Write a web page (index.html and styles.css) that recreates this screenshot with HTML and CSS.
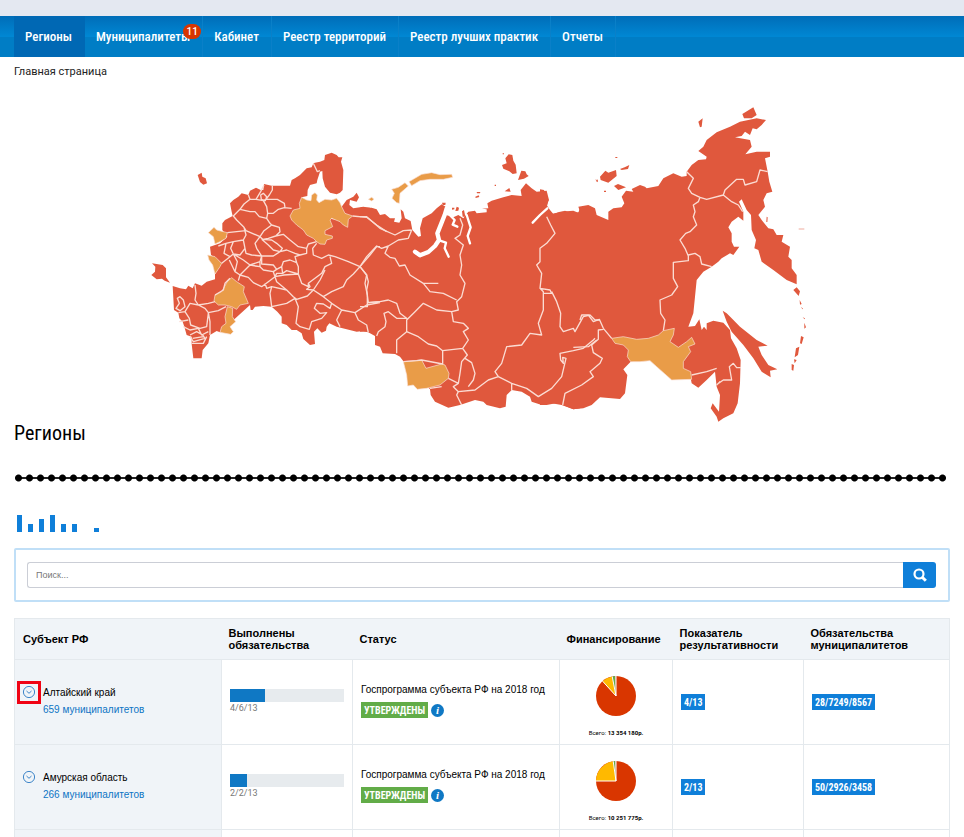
FILE: index.html
```html
<!DOCTYPE html>
<html lang="ru">
<head>
<meta charset="utf-8">
<meta name="viewport" content="width=device-width, initial-scale=1">
<title>Регионы</title>
<link rel="stylesheet" href="styles.css">
</head>
<body>
<div class="topbar"></div>
<nav class="nav">
  <a class="nav-item active" href="#">Регионы</a>
  <a class="nav-item" href="#">Муниципалитеты<span class="badge">11</span></a>
  <a class="nav-item" href="#">Кабинет</a>
  <a class="nav-item" href="#">Реестр территорий</a>
  <a class="nav-item" href="#">Реестр лучших практик</a>
  <a class="nav-item" href="#">Отчеты</a>
</nav>
<main class="page">
  <a class="crumb" href="#">Главная страница</a>
  <svg class="map" viewBox="420 300 2010 990" role="img" aria-label="Карта регионов">
    <g class="land">
      <g transform="translate(420 420)">
        <path d="M525 68 540 65 553 60 555 45 575 38 590 45 596 52 607 52 603 65 610 90 608 150 600 158 590 163 570 158 555 140 548 115 547 93 540 95 532 120 530 130 510 135 503 150 502 168 485 172 515 230 600 240 605 200 620 180 640 170 650 158 657 172 650 185 630 180 628 195 640 205 670 200 690 203 690 578 670 573 650 575 620 568 590 560 568 550 560 560 558 572 545 578 532 565 522 575 525 612 510 615 490 597 485 580 470 570 455 570 440 555 425 550 425 530 412 515 395 500 370 498 345 500 338 510 332 510 330 495 240 577 230 573 210 585 205 610 188 630 185 655 160 655 155 612 155 590 140 585 133 560 128 545 118 535 115 518 102 510 98 438 120 445 138 448 145 437 158 445 165 430 185 437 200 425 225 418 225 402 245 370 213 345 210 320 240 310 262 290 247 270 247 250 255 240 278 228 275 215 270 190 280 180 295 170 305 160 325 165 330 152 348 143 362 150 370 150 372 132 395 137 450 137 455 120 465 115 480 105 500 85 515 82 520 70Z"/>
        <path d="M173 105 185 98 187 110 197 115 201 130 190 134 180 126Z"/>
        <path d="M36 370 68 375 78 385 78 412 90 428 74 422 66 416 50 418 34 405 45 395 46 380Z"/>
      </g>
      <g transform="translate(1080 420)">
        <path d="M0 203 35 203 50 208 60 225 75 222 90 235 105 235 102 245 118 248 125 235 122 208 130 215 135 235 152 243 157 270 175 290 183 288 180 265 188 235 215 220 230 205 245 193 257 200 258 225 280 232 295 225 310 235 325 215 345 212 350 220 380 217 380 208 366 206 385 205 382 190 395 182 430 172 455 165 485 168 482 150 498 130 515 145 530 155 560 152 567 180 560 195 570 210 580 222 600 215 640 212 655 218 660 203 660 805 640 808 605 795 575 790 545 795 515 785 510 770 485 755 455 750 440 765 437 800 420 805 380 795 370 785 345 780 300 795 265 803 225 785 212 765 210 748 150 690 120 650 105 642 68 640 60 620 45 615 45 588 22 575 0 575Z"/>
        <path d="M426 75 440 70 436 55 446 43 457 45 460 62 467 74 470 100 458 102 448 94 430 86Z"/>
        <path d="M484 92 496 94 500 103 506 108 492 116 474 120Z"/>
        <path d="M246 188 257 188 256 195 248 195ZM276 203 283 203 283 208 276 209ZM290 200 297 203 295 212 286 213ZM306 214 312 210 316 230 308 230ZM346 170 356 166 358 171 347 174ZM350 156 361 156 360 160 351 160ZM404 134 408 134 408 138 404 138ZM434 154 448 144 452 155ZM428 40 432 40 432 43 428 43ZM706 118 714 124 711 127Z"/>
      </g>
      <g transform="translate(1620 300)">
        <path d="M0 268 12 270 25 300 22 315 15 335 20 345 45 340 65 335 75 332 100 342 120 335 115 320 145 315 165 325 170 345 205 360 205 335 220 325 245 322 253 310 245 290 258 272 280 275 275 267 300 255 315 260 320 265 355 258 370 235 400 220 425 230 440 228 440 215 455 195 475 180 498 178 500 170 475 153 490 140 500 120 530 97 570 80 600 65 650 55 678 60 665 75 650 88 638 85 630 105 615 95 605 108 585 112 630 120 635 140 616 163 650 155 690 155 690 170 675 175 683 215 688 245 697 275 680 280 670 300 675 320 655 345 665 360 685 385 700 388 710 405 730 405 725 425 750 440 745 470 755 480 755 505 770 525 770 553 740 540 700 510 665 485 655 450 643 445 648 420 635 390 633 345 620 330 605 298 597 305 610 335 610 362 595 350 575 365 565 382 575 400 575 425 582 440 598 440 580 465 570 460 545 475 535 485 515 500 490 515 470 540 465 590 460 640 445 680 465 678 478 658 485 690 492 680 500 690 500 670 520 662 550 668 570 690 573 715 590 745 602 780 600 850 593 910 580 940 550 955 535 965 530 950 512 925 518 910 537 935 540 885 530 860 525 815 500 840 475 863 455 850 452 835 395 805 350 765 272 785 250 808 262 825 255 880 240 897 180 892 155 915 130 925 100 928 68 915 55 908 20 915 0 915Z"/>
        <path d="M548 632 560 640 575 655 600 680 650 720 683 737 655 740 665 765 685 795 712 808 690 812 692 832 665 815 640 775 610 735 575 695 560 665Z"/>
        <path d="M475 65 488 55 485 80 480 82ZM607 42 640 22 650 45 635 55 612 55Z"/>
        <path d="M180 230 196 212 205 218 228 210 230 228 205 248 182 240ZM240 207 254 202 268 195 264 207 245 210ZM222 258 234 252 258 262 235 270ZM226 171 232 171 232 174 226 174ZM170 238 174 240 172 245ZM192 272 198 272 198 276 192 276Z"/>
        <path d="M760 570 770 562 780 574 776 588ZM779 600 785 612 780 614ZM783 620 789 626 787 628ZM788 652 795 655 794 658ZM793 668 798 682 793 686ZM783 708 791 712 785 732 780 730ZM768 745 778 740 774 765 764 772ZM762 778 770 780 764 790ZM755 792 762 795 760 812 755 810ZM680 350 683 352 682 366 679 366ZM776 386 793 386 793 388 776 388Z"/>
      </g>
    </g>
    <g class="approved">
      <g transform="translate(420 420)">
        <path d="M485 172 500 180 513 182 515 165 525 158 532 165 530 180 537 188 555 178 575 180 590 175 600 188 605 200 615 220 638 228 625 238 623 262 610 255 600 245 575 235 570 240 578 260 555 272 555 283 577 288 577 295 560 300 555 313 540 312 530 305 520 295 500 285 490 270 470 255 455 240 450 228 460 210 480 205 478 190Z"/>
        <path d="M222 262 230 270 262 278 258 295 240 305 225 312 220 290 205 278ZM203 345 225 350 245 370 240 380 225 402 218 375 207 360Z"/>
        <path d="M262 425 275 413 290 425 313 440 310 455 325 490 300 495 290 508 275 500 255 495 235 495 222 483 225 465 245 455ZM262 500 278 505 277 530 287 545 270 560 280 575 272 583 240 577 245 560 258 550 255 530Z"/>
        <path d="M685 178 695 172 702 178 695 183Z"/>
      </g>
      <g transform="translate(1080 420)">
        <path d="M95 148 115 142 135 128 145 138 120 160 118 190 110 188 96 175 103 160ZM147 125 185 103 215 98 240 104 275 103 278 112 250 118 210 118 180 122 155 137Z"/>
        <path d="M130 665 185 660 198 685 245 672 255 675 267 700 265 715 240 735 200 745 172 748 160 735 143 738 140 705Z"/>
      </g>
      <path transform="translate(1620 300)" d="M215 715 250 710 290 718 325 715 355 705 370 692 403 685 400 705 390 725 415 742 440 725 455 712 465 732 445 740 452 755 430 785 430 805 452 815 455 838 395 840 350 800 330 782 300 785 272 785 262 770 265 750 250 735 225 730Z"/>
    </g>
    <g class="borders">
      <path transform="translate(420 420)" d="M520 70 532 95 540 92M372 135 362 155 348 178 330 178 325 165M348 178 370 182 378 178 388 165 397 150 397 137M362 165 370 160 380 170 376 182 364 178ZM330 178 312 192 300 208 280 228 290 240 312 262 318 272 290 275 262 278M300 208 330 215 345 215 358 230 380 235 390 250 395 255M370 182 380 200 383 220 400 220 415 208 433 203 455 205M378 178 412 178 433 190 435 203M383 220 380 235M395 255 418 262 420 275 407 288 385 295 368 298 360 290 318 272M395 255 372 272 360 290 345 310 350 325 365 348 360 365 330 375 310 360 280 342 270 350 245 370M312 262 318 285 310 300 280 305 258 310M280 305 272 325 280 342 300 345 315 325 310 300M315 325 318 340 335 345 365 348M235 318 258 310 252 340 270 350M280 342 292 365 285 395 300 405 330 375M285 395 268 360M300 405 295 422M300 405 325 412 340 428 365 440 385 425 405 410 400 395 370 390 360 380 330 375M360 365 360 380 345 378M365 298 385 315 400 330 420 335 427 325 410 310 395 300 368 298M407 288 430 283 450 300 475 320 500 325 505 312 530 305M420 335 440 330 465 340 480 345 500 340 500 325M365 348 400 348 420 335M365 348 365 372 400 375 410 388 425 380 430 365 450 360 470 368 465 350 480 345M400 395 410 388M425 380 428 400 410 400 405 410 432 405 475 402 475 380 470 368M428 400 440 392 475 402 485 430 505 440 505 430 545 400 555 380 575 370 570 350M530 310 518 325 520 345 545 355 565 345 585 350 625 365 660 380 690 345 710 320 720 320M660 380 680 405 685 425 680 450 685 488 720 485M660 380 640 402 620 420 610 440 575 455 550 470 520 450 540 420 555 390M505 430 510 440 500 448 520 450 502 468 470 478 460 470 440 450 395 440 380 445 375 430M395 440 390 460 395 500 440 490 465 475M405 410 410 425 440 450M550 470 575 490 605 510 645 518 680 495 720 488M605 510 590 540 600 560M645 518 655 540 680 555 685 578M465 475 475 500 468 550 480 560 508 568 515 545 545 535 560 518 540 520 523 505 530 490 550 492 570 505 575 490M638 228 680 232 710 255 740 275M225 465 250 450 255 430 270 415M225 485 205 490 175 495 165 480 168 460 165 435M175 495 150 490 135 515 115 518M175 495 195 505 205 518 235 512 258 500M205 518 210 545 210 585M120 470 130 480 135 500 120 512 108 505 118 490 112 475ZM135 515 148 535 152 555 180 565 200 560 205 520M118 545 145 540M130 560 150 570 175 565 185 585 205 575M150 585 170 575 188 585 195 595 160 605 150 590M158 595 190 590M155 610 190 610 200 590"/>
      <path transform="translate(1080 420)" d="M0 230 20 230 60 265 105 285 130 272 155 270M155 270 145 295 115 300 85 318 65 325 50 318 20 350 0 380 20 405 15 430 22 465 22 500 0 500M22 488 60 485 85 480 110 490 120 520 140 535 110 535 85 515 72 520 78 545 75 560 55 575 50 588M85 318 75 340 90 352 105 355 118 378 135 375 150 405 190 430 235 430M190 430 210 455 250 460 290 480M300 235 308 255 300 285 285 295 310 315 300 345 305 375 300 405 315 430 305 470 290 485 295 510 275 515 230 510 190 490 165 515 140 540 140 575 110 600 110 640M140 575 175 590 205 612 230 618 248 632 308 625 325 600 310 575 325 565 310 550 280 545 275 515M248 632 248 672 185 660 170 662 130 665M308 625 322 645 305 665 300 700 295 730 280 740 295 755 345 750 385 720 415 710 405 695 425 670 440 620 485 615 510 580 545 585 535 550 550 510 550 455 540 445 545 400 530 375 540 365 540 325 560 310 585 280 572 255 560 230M315 655 335 668 345 700 340 720 325 740M265 715 295 730M245 740 210 745M295 755 290 765 305 795M415 710 455 730 500 745 535 770 575 745 605 710 618 655 608 652 610 670 602 660 600 640 640 632 670 625 700 600 705 595M455 730 455 750M540 445 570 450 575 460 550 460M575 455 590 485 602 520 600 560 610 575 640 565 645 575 670 530 690 525 705 540 720 540"/>
      <path transform="translate(1620 300)" d="M440 215 460 235 445 265 455 280 480 292 475 305 460 315 465 335 460 350 470 375 450 395 437 400 420 420 435 445 445 468 445 482 400 487 400 535 413 560 395 585 360 600 362 640 375 660 370 692M445 465 465 460 480 470 485 492 515 500M480 292 500 298 550 285 555 270 590 238 610 238 615 255 650 245 660 210 683 215M550 285 575 305 595 315 608 335M120 660 125 645 145 645 160 665 178 658 190 685 215 715M190 688 175 690 175 718 155 735 160 758 187 775 180 790 150 815 160 830 125 855 75 880 68 915M100 742 145 740 170 720M455 825 500 815 530 805M535 850 550 840 575 840 568 800 580 790 590 803 603 803M530 855 540 845"/>
    </g>
    <g class="water" transform="translate(1080 420)">
      <path class="wide" d="M165 335 180 346 205 336 225 318 237 300 232 280 244 250 254 225 260 205"/>
      <path class="mid" d="M240 302 258 308 254 325 266 350M272 228 284 240 278 254 292 260M320 225 332 262 323 288 330 310"/>
      <path class="mid" d="M562 205 540 225 518 248"/>
    </g>
  </svg>
  <h1 class="title">Регионы</h1>
  <div class="beads"></div>
  <div class="bars">
    <i class="bar h17"></i><i class="bar h8"></i><i class="bar h13"></i><i class="bar h17"></i><i class="bar h8"></i><i class="bar h8"></i><i class="bar"></i><i class="bar h4"></i>
  </div>
  <form class="search">
    <input class="search-input" type="text" placeholder="Поиск..." aria-label="Поиск">
    <button class="search-btn" type="button" aria-label="Найти"><svg width="14" height="14" viewBox="0 0 14 14"><circle cx="6" cy="6" r="4.500" fill="none" stroke="currentColor" stroke-width="2.200"/><path d="M9 9l3.800 3.800" stroke="currentColor" stroke-width="3"/></svg></button>
  </form>
  <table class="regions">
    <colgroup><col class="c-name"><col class="c-mid"><col class="c-name"><col class="c-fin"><col class="c-mid"><col></colgroup>
    <thead>
      <tr><th>Субъект РФ</th><th>Выполнены обязательства</th><th>Статус</th><th>Финансирование</th><th>Показатель результативности</th><th>Обязательства муниципалитетов</th></tr>
    </thead>
    <tbody>
      <tr>
        <td><div class="subject"><button class="toggle marked" type="button" aria-label="Развернуть"><svg width="14" height="14" viewBox="0 0 14 14"><circle cx="7" cy="7" r="5.600"/><path d="M4.500 6 7 8.300 9.500 6"/></svg></button><div class="names"><span>Алтайский край</span><a href="#">659 муниципалитетов</a></div></div></td>
        <td><div class="progress"><div class="fill" style="width:31%"></div></div><div class="count">4/6/13</div></td>
        <td><div class="status">Госпрограмма субъекта РФ на 2018 год</div><div class="state"><span class="tag green">УТВЕРЖДЕНЫ</span><span class="info">i</span></div></td>
        <td class="finance"><svg class="pie" width="42" height="42" viewBox="-21 -21 42 42"><circle r="20" fill="#d93600"/><path d="M0 0-13.400-14.800A20 20 0 0 1-3.800-19.600Z" fill="#ffb900"/><path d="M0 0-3.800-19.600A20 20 0 0 1-.8-20Z" fill="#62ac48"/><path d="M0 0-.8-20H0Z" fill="#bbb"/><path d="M-13.400-14.800 0 0-3.800-19.600M0 0V-20" fill="none" stroke="#fff"/></svg><div class="total">Всего: <b>13 354 180р.</b></div></td>
        <td><span class="tag">4/13</span></td>
        <td><span class="tag">28/7249/8567</span></td>
      </tr>
      <tr>
        <td><div class="subject"><button class="toggle" type="button" aria-label="Развернуть"><svg width="14" height="14" viewBox="0 0 14 14"><circle cx="7" cy="7" r="5.600"/><path d="M4.500 6 7 8.300 9.500 6"/></svg></button><div class="names"><span>Амурская область</span><a href="#">266 муниципалитетов</a></div></div></td>
        <td><div class="progress"><div class="fill" style="width:15%"></div></div><div class="count">2/2/13</div></td>
        <td><div class="status">Госпрограмма субъекта РФ на 2018 год</div><div class="state"><span class="tag green">УТВЕРЖДЕНЫ</span><span class="info">i</span></div></td>
        <td class="finance"><svg class="pie" width="42" height="42" viewBox="-21 -21 42 42"><circle r="20" fill="#d93600"/><path d="M0 0H-20A20 20 0 0 1-2.800-19.800Z" fill="#ffb900"/><path d="M0 0-2.800-19.800A20 20 0 0 1-.8-20Z" fill="#62ac48"/><path d="M0 0-.8-20H0Z" fill="#bbb"/><path d="M-20 0H0L-2.800-19.800M0 0V-20" fill="none" stroke="#fff"/></svg><div class="total">Всего: <b>10 251 775р.</b></div></td>
        <td><span class="tag">2/13</span></td>
        <td><span class="tag">50/2926/3458</span></td>
      </tr>
      <tr class="next"><td></td><td></td><td></td><td></td><td></td><td></td></tr>
    </tbody>
  </table>
</main>
</body>
</html>
```
FILE: styles.css
```css
* { box-sizing: border-box; }
body { margin: 0; background: #fff; color: #000; font: 10px/12px "Liberation Sans", Arial, sans-serif; }
a { color: #0d74c4; text-decoration: none; }
.topbar { height: 16px; background: #e4e8f1; }
.nav { display: flex; height: 41px; padding-left: 14px; background: linear-gradient(#006db8, #0087d3 50%, #007dc5 52%, #007dc5); }
.nav-item { position: relative; display: flex; align-items: center; padding: 0 12px 0 11px; border-right: 1px solid #0a80c8; color: #fff; font: 500 13px/16px "Roboto Condensed", "Liberation Sans Narrow", Roboto, sans-serif; white-space: nowrap; }
.nav-item.active { background: #0068b4; border-color: #0068b4; }
.badge { position: absolute; top: 8px; right: 1px; width: 18px; height: 15px; border-radius: 8px; background: #d93600; color: #fff; font: 500 10px/15px Roboto, sans-serif; text-align: center; }
.page { padding: 8px 14px 0; }
.crumb { display: block; color: #222; font: 11px/13px Roboto, sans-serif; }
.map { display: block; width: 72%; max-width: 670px; margin: 22px auto 0 126px; }
.land { fill: #e0583d; }
.approved { fill: #e99c48; stroke: #fbe0d6; stroke-width: 2; }
.borders { fill: none; stroke: #fbdcd3; stroke-width: 4; stroke-linejoin: round; }
.water { fill: none; stroke: #fff; stroke-linejoin: round; stroke-linecap: round; }
.wide { stroke-width: 13; }
.mid { stroke-width: 7; }
.title { margin: -9px 0 0; font: 400 20px/24px "Roboto Condensed", "Liberation Sans Narrow", Roboto, sans-serif; }
.beads { height: 8px; margin: 29px 1px 0 -1px; background-image: radial-gradient(circle at center, #000 0 3px, transparent 4px), linear-gradient(transparent 3px, #222 3px 5px, transparent 5px); background-size: 11px 8px, calc(100% - 10px) 8px; background-position: 0 0, 5px 0; background-repeat: round no-repeat, no-repeat; }
.bars { display: flex; align-items: flex-end; gap: 6px; height: 17px; margin: 33px 0 16px 3px; }
.bar { width: 5px; background: #0f7fd9; }
.h17 { height: 17px; }
.h13 { height: 13px; }
.h8 { height: 8px; }
.h4 { height: 4px; }
.search { display: flex; padding: 12px 12px 12px 11px; border: 2px solid #c0dff7; border-radius: 2px; }
.search-input { flex: 1; min-width: 0; height: 26px; padding: 0 8px; border: 1px solid #cbced6; border-right: 0; border-radius: 3px 0 0 3px; background: #fff; font: 9px/12px "Liberation Sans", Arial, sans-serif; }
.search-input::placeholder { color: #777; opacity: 1; }
.search-btn { display: flex; align-items: center; justify-content: center; width: 33px; height: 26px; padding: 0; border: 0; border-radius: 0 3px 3px 0; background: #0f7fd9; color: #fff; }
.regions { width: 100%; margin-top: 16px; border-collapse: collapse; table-layout: fixed; }
.c-name { width: 207px; }
.c-mid { width: 131px; }
.c-fin { width: 113px; }
th { height: 41px; padding: 0 7px; border: 1px solid #e4e9ed; border-width: 1px 0; background: #f0f4f8; font: 700 11px/12px "Liberation Sans", Arial, sans-serif; text-align: left; }
th:first-child { padding-left: 8px; border-left-width: 1px; }
th:last-child { border-right-width: 1px; }
td { height: 85px; padding: 0 8px; border: 1px solid #e4e9ed; }
td:first-child { padding-left: 2px; background: #f0f4f8; }
.next td { height: 8px; border-bottom: 0; }
.subject { display: flex; align-items: flex-start; gap: 2px; margin-bottom: 8px; }
.toggle { display: flex; flex: none; align-items: center; justify-content: center; width: 24px; height: 23px; padding: 0; border: 3px solid transparent; background: none; }
.toggle svg { flex: none; fill: none; stroke: #3f86c9; }
.toggle.marked { border-color: #f00314; }
.names { display: flex; flex-direction: column; gap: 5px; padding-top: 6px; }
.progress { height: 13px; background: #e7ebee; }
.fill { height: 100%; background: #0f78c4; }
.count { color: #777; font: 9px/13px Roboto, sans-serif; }
.status { white-space: nowrap; }
.state { display: flex; align-items: center; gap: 3px; margin: 6px 0 2px; }
.tag { display: inline-block; height: 16px; padding: 0 3px; background: #0f7fd9; color: #fff; font: 700 10px/17px "Roboto Condensed", Roboto, sans-serif; white-space: nowrap; vertical-align: middle; }
.tag.green { background: #62ac48; }
.info { width: 13px; height: 13px; border-radius: 50%; background: #0f78c4; color: #fff; font: italic 700 11px/13px "Liberation Serif", serif; text-align: center; }
.finance { padding: 8px 0 0; text-align: center; }
.pie { display: block; margin: 0 auto 12px; }
.total { font: 6px/8px Roboto, sans-serif; }
```
